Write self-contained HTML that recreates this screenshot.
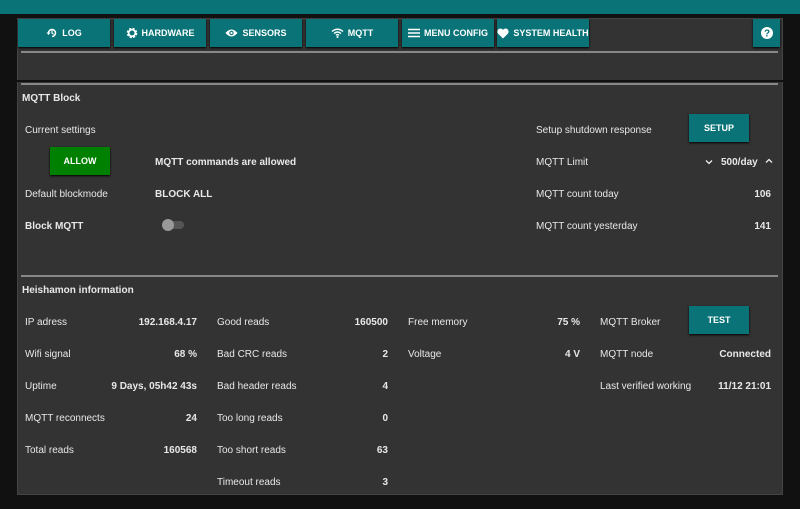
<!DOCTYPE html><html><head><style>
*{margin:0;padding:0;box-sizing:border-box}
body{width:800px;height:509px;background:#111;font-family:"Liberation Sans",sans-serif;font-size:10px;color:#e8e8e8;position:relative;overflow:hidden}
.a{position:absolute;white-space:nowrap;margin-top:1px}
.top{left:0;top:-1px;width:800px;height:14px;background:#0a7377}
.wrap{left:17px;top:17px;width:766px;height:477px;background:#333;border:1px solid #444}
.nb{position:absolute;top:19px;height:28px;background:#0a7377;color:#fff;font-weight:bold;font-size:9px;display:flex;align-items:center;justify-content:center;gap:4px;box-shadow:0 1px 2px #000}
.line{position:absolute;left:21px;width:757px;height:2px;background:#888}
.sep{position:absolute;left:17px;width:766px;height:2px;background:#111}
.b{font-weight:bold}
.r{text-align:right}
.btn{position:absolute;background:#0a7377;color:#fff;font-weight:bold;font-size:9px;display:flex;align-items:center;justify-content:center;box-shadow:0 1px 2px #000}
</style></head><body>
<div class="a top"></div>
<div class="a wrap"></div>
<div class="nb" style="left:18px;width:92px"><svg width="12" height="12" viewBox="0 0 12 12"><path d="M2.5 6A3.5 3.5 0 1 1 6 9.5" stroke="#fff" stroke-width="1.5" fill="none"/><path d="M0.5 5.5L2.5 8 4.5 5.5Z" fill="#fff"/><path d="M6 3.5V6.2L7.8 7.3" stroke="#fff" stroke-width="1.2" fill="none"/></svg>LOG</div>
<div class="nb" style="left:114px;width:92px"><svg width="12" height="12" viewBox="0 0 12 12"><circle cx="6" cy="6" r="4" fill="none" stroke="#fff" stroke-width="2.5" stroke-dasharray="2 1.2"/><circle cx="6" cy="6" r="3.3" fill="none" stroke="#fff" stroke-width="1.6"/></svg>HARDWARE</div>
<div class="nb" style="left:210px;width:92px"><svg width="13" height="10" viewBox="0 0 13 10"><path d="M0.5 5Q6.5-2 12.5 5Q6.5 12 0.5 5Z" fill="#fff"/><circle cx="6.5" cy="5" r="2.2" fill="#0a7377"/><circle cx="6.5" cy="5" r="1.1" fill="#fff"/></svg>SENSORS</div>
<div class="nb" style="left:306px;width:92px"><svg width="13" height="10" viewBox="0 0 13 10"><path d="M1 3.5Q6.5-1 12 3.5M3 5.5Q6.5 2.5 10 5.5M5 7.3Q6.5 6 8 7.3" stroke="#fff" stroke-width="1.4" fill="none"/><circle cx="6.5" cy="9" r="1" fill="#fff"/></svg>MQTT</div>
<div class="nb" style="left:402px;width:92px"><svg width="12" height="10" viewBox="0 0 12 10"><path d="M0 1.5H12M0 5H12M0 8.5H12" stroke="#fff" stroke-width="1.4"/></svg>MENU CONFIG</div>
<div class="nb" style="left:497px;width:92px"><svg width="12" height="11" viewBox="0 0 12 11"><path d="M6 10.5L1 5.5A2.8 2.8 0 0 1 6 1.8A2.8 2.8 0 0 1 11 5.5Z" fill="#fff"/></svg>SYSTEM HEALTH</div>
<div class="nb" style="left:753px;width:27px"><svg width="12" height="12" viewBox="0 0 12 12"><circle cx="6" cy="6" r="6" fill="#fff"/><text x="6" y="9.5" text-anchor="middle" font-size="10" font-weight="bold" fill="#0a7377" font-family="Liberation Sans">?</text></svg></div>
<div class="line" style="top:51px"></div>
<div class="sep" style="top:80px"></div>
<div class="line" style="top:83px"></div>
<div class="a b" style="left:22px;top:92px">MQTT Block</div>
<div class="a" style="left:25px;top:124px">Current settings</div>
<div class="btn" style="left:50px;top:147px;width:60px;height:28px;background:#008000">ALLOW</div>
<div class="a b" style="left:155px;top:156px">MQTT commands are allowed</div>
<div class="a" style="left:25px;top:188px">Default blockmode</div>
<div class="a b" style="left:155px;top:188px">BLOCK ALL</div>
<div class="a b" style="left:25px;top:220px">Block MQTT</div>
<div class="a" style="left:163px;top:220px;width:21px;height:8px;border-radius:4px;background:#555"></div>
<div class="a" style="left:162px;top:218px;width:12px;height:12px;border-radius:6px;background:#999"></div>
<div class="a" style="left:536px;top:124px">Setup shutdown response</div>
<div class="btn" style="left:689px;top:114px;width:60px;height:28px">SETUP</div>
<div class="a" style="left:536px;top:156px">MQTT Limit</div>
<svg class="a" style="left:705px;top:158px" width="8" height="6" viewBox="0 0 8 6"><path d="M1 1.5L4 4.5 7 1.5" stroke="#eee" stroke-width="1.3" fill="none"/></svg>
<div class="a b" style="left:721px;top:156px">500/day</div>
<svg class="a" style="left:765px;top:157px" width="8" height="6" viewBox="0 0 8 6"><path d="M1 4.5L4 1.5 7 4.5" stroke="#eee" stroke-width="1.3" fill="none"/></svg>
<div class="a" style="left:536px;top:188px">MQTT count today</div>
<div class="a b r" style="left:700px;width:71px;top:188px">106</div>
<div class="a" style="left:536px;top:220px">MQTT count yesterday</div>
<div class="a b r" style="left:700px;width:71px;top:220px">141</div>
<div class="line" style="top:275px"></div>
<div class="a b" style="left:22px;top:284px">Heishamon information</div>

<div class="a" style="left:25px;top:316px">IP adress</div><div class="a b r" style="left:100px;width:97px;top:316px">192.168.4.17</div>
<div class="a" style="left:25px;top:348px">Wifi signal</div><div class="a b r" style="left:100px;width:97px;top:348px">68 %</div>
<div class="a" style="left:25px;top:380px">Uptime</div><div class="a b r" style="left:100px;width:97px;top:380px">9 Days, 05h42 43s</div>
<div class="a" style="left:25px;top:412px">MQTT reconnects</div><div class="a b r" style="left:100px;width:97px;top:412px">24</div>
<div class="a" style="left:25px;top:444px">Total reads</div><div class="a b r" style="left:100px;width:97px;top:444px">160568</div>

<div class="a" style="left:217px;top:316px">Good reads</div><div class="a b r" style="left:300px;width:88px;top:316px">160500</div>
<div class="a" style="left:217px;top:348px">Bad CRC reads</div><div class="a b r" style="left:300px;width:88px;top:348px">2</div>
<div class="a" style="left:217px;top:380px">Bad header reads</div><div class="a b r" style="left:300px;width:88px;top:380px">4</div>
<div class="a" style="left:217px;top:412px">Too long reads</div><div class="a b r" style="left:300px;width:88px;top:412px">0</div>
<div class="a" style="left:217px;top:444px">Too short reads</div><div class="a b r" style="left:300px;width:88px;top:444px">63</div>
<div class="a" style="left:217px;top:476px">Timeout reads</div><div class="a b r" style="left:300px;width:88px;top:476px">3</div>

<div class="a" style="left:408px;top:316px">Free memory</div><div class="a b r" style="left:500px;width:80px;top:316px">75 %</div>
<div class="a" style="left:408px;top:348px">Voltage</div><div class="a b r" style="left:500px;width:80px;top:348px">4 V</div>

<div class="a" style="left:600px;top:316px">MQTT Broker</div>
<div class="btn" style="left:689px;top:306px;width:60px;height:28px">TEST</div>
<div class="a" style="left:600px;top:348px">MQTT node</div><div class="a b r" style="left:690px;width:81px;top:348px">Connected</div>
<div class="a" style="left:600px;top:380px">Last verified working</div><div class="a b r" style="left:690px;width:81px;top:380px">11/12 21:01</div>
</body></html>
